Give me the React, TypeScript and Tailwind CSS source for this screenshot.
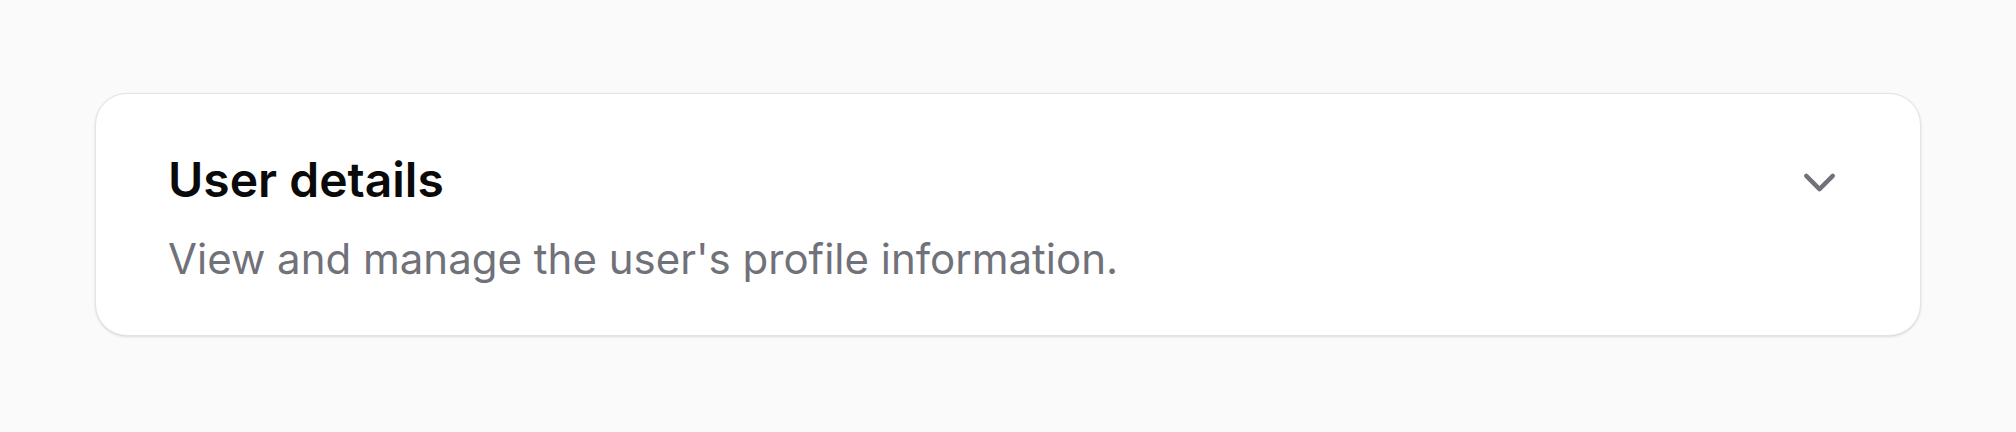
import React from 'react';

const ChevronDown = () => (
  <svg
    className="w-[53px] h-[53px] text-[#71717a] shrink-0"
    viewBox="0 0 24 24"
    fill="none"
    stroke="currentColor"
    strokeWidth={2}
    strokeLinecap="round"
    strokeLinejoin="round"
  >
    <path d="m6 9 6 6 6-6" />
  </svg>
);

const App = () => {
  return (
    <div className="min-h-[432px] bg-[#fafafa] px-[95px] py-[93px] font-['Inter','Noto_Sans',sans-serif]">
      {/* Card */}
      <div className="flex items-start justify-between bg-white border border-[#e4e4e7] rounded-[32px] shadow-sm pl-[72px] pr-[74px] pt-[62px] pb-[50px]">
        <div className="flex flex-col">
          <h2 className="text-[48px] leading-[48px] font-semibold text-[#0a0a0a]">User details</h2>
          <p className="mt-[29px] text-[42px] leading-[52px] text-[#71717a]">
            View and manage the user's profile information.
          </p>
        </div>
        <ChevronDown />
      </div>
    </div>
  );
};

export default App;
